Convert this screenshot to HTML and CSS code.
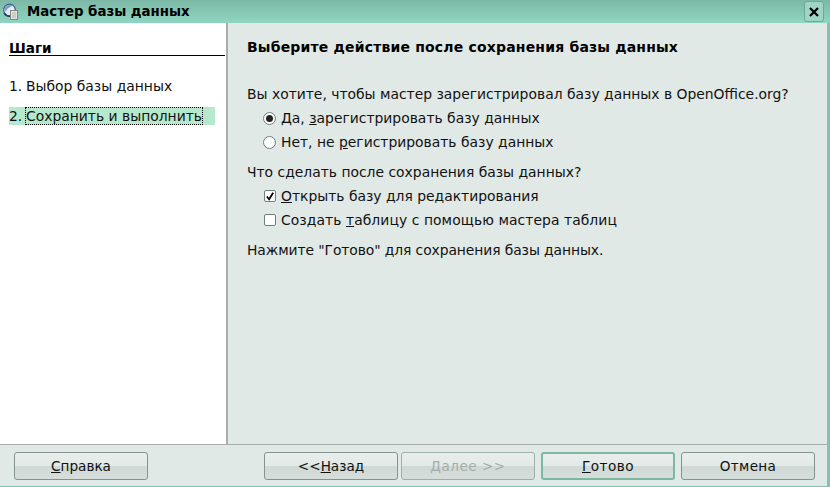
FILE: index.html
```html
<!DOCTYPE html>
<html lang="ru">
<head>
<meta charset="utf-8">
<title>Мастер базы данных</title>
<link rel="stylesheet" href="styles.css">
</head>
<body>
<div class="window">
  <header class="titlebar">
    <svg class="app-icon" width="18" height="18" viewBox="0 0 18 18">
      <circle cx="6.5" cy="7" r="5.8" fill="#e4ecf5" stroke="#3c5f8e" stroke-width="1.2"/>
      <path d="M1.5 6 C3 2 7 1 10 2.5 L7 4 L4 6 L3 9 Z" fill="#7f9dc4"/>
      <path d="M1 10 C3 13 6 13.5 8 13" fill="none" stroke="#24395c" stroke-width="1.4"/>
      <rect x="7.5" y="7.5" width="7" height="9" fill="#e6e6de" stroke="#7f8780"/>
      <path d="M9 10h4M9 12h4M9 14h4" stroke="#b0b5ae" stroke-width="1"/>
    </svg>
    <span class="title">Мастер базы данных</span>
    <span class="close">
      <svg width="10" height="10" viewBox="0 0 10 10"><path d="M1 1 L9 9 M9 1 L1 9" stroke="#000" stroke-width="2.2"/></svg>
    </span>
  </header>
  <div class="main">
    <aside class="steps">
      <h2 class="steps-title">Шаги</h2>
      <div class="step"><span class="num">1.</span><span class="step-text">Выбор базы данных</span></div>
      <div class="step current"><span class="num">2.</span><span class="step-text focus">Сохранить и выполнить</span></div>
    </aside>
    <section class="content">
      <h1 class="heading">Выберите действие после сохранения базы данных</h1>
      <p class="question">Вы хотите, чтобы мастер зарегистрировал базу данных в OpenOffice.org?</p>
      <div class="options">
        <div class="option"><span class="radio checked"></span><span>Да, <u>з</u>арегистрировать базу данных</span></div>
        <div class="option"><span class="radio"></span><span>Нет, не <u>р</u>егистрировать базу данных</span></div>
      </div>
      <p class="question second">Что сделать после сохранения базы данных?</p>
      <div class="options">
        <div class="option"><span class="check"><svg width="11" height="11" viewBox="0 0 11 11"><path d="M2 5.5 L4.5 8.5 L9 1.5" fill="none" stroke="#000" stroke-width="2"/></svg></span><span><u>О</u>ткрыть базу для редактирования</span></div>
        <div class="option wide-line"><span class="check"></span><span>Создать <u>т</u>аблицу с помощью мастера таблиц</span></div>
      </div>
      <p class="question third">Нажмите "Готово" для сохранения базы данных.</p>
    </section>
  </div>
  <footer class="buttons">
    <button class="btn"><u>С</u>правка</button>
    <span class="spacer"></span>
    <button class="btn">&lt;&lt;<u>Н</u>азад</button>
    <button class="btn disabled wide"><u>Д</u>алее &gt;&gt;</button>
    <button class="btn default wide"><u>Г</u>отово</button>
    <button class="btn cancel">Отмена</button>
  </footer>
</div>
</body>
</html>
```
FILE: styles.css
```css
html, body { margin: 0; padding: 0; }
body { width: 830px; height: 487px; overflow: hidden; font-family: "DejaVu Sans", sans-serif; font-size: 13.9px; color: #111; }
.window { width: 830px; height: 487px; display: flex; flex-direction: column; box-sizing: border-box; background: #e1e9e6; border-right: 3px solid #7fc4b0; border-bottom: 1px solid #7fc4b0; }
.titlebar { flex: none; height: 23px; margin-right: -3px; display: flex; align-items: center; padding: 0 6px 0 3px; background: linear-gradient(#7cb8a6, #8ed6c1); }
.app-icon { flex: none; }
.title { margin-left: 6px; font-weight: bold; font-size: 13.33px; flex: 1; color: #000; }
.close { width: 20px; height: 21px; display: flex; align-items: center; justify-content: center; border: 1px solid #6fa796; border-radius: 3px; background: #9ed5c5; box-sizing: border-box; }
.main { flex: 1; display: flex; min-height: 0; }
.steps { flex: none; width: 228px; box-sizing: border-box; background: #fff; padding: 17px 0 0 9px; border-right: 2px solid #a9aead; }
.steps-title { margin: 0 0 21px; font-size: 13.6px; font-weight: bold; line-height: 16px; height: 15px; width: 216px; border-bottom: 1px solid #000; color: #000; }
.step { display: flex; align-items: center; height: 18px; margin-bottom: 12px; width: 206px; }
.num { width: 17px; flex: none; }
.current { background: #b5e8cd; }
.focus { outline: 1px dotted #000; line-height: 16px; height: 16px; }
.content { flex: 1; padding: 16px 0 0 19px; }
.heading { margin: 0 0 30px; font-size: 14px; letter-spacing: .18px; font-weight: bold; line-height: 17px; color: #000; }
.question { margin: 0; line-height: 17px; height: 17px; }
.options { padding-top: 3px; }
.second { margin-top: 10px; }
.third { margin-top: 10px; letter-spacing: -.1px; }
.option { display: flex; align-items: center; height: 24px; padding-left: 16px; }
.wide-line { letter-spacing: .07px; }
.radio { flex: none; width: 13px; height: 13px; box-sizing: border-box; border-radius: 50%; border: 1px solid #6f7f7a; background: #fff; margin-right: 5px; display: flex; align-items: center; justify-content: center; }
.radio.checked::before { content: ""; width: 7px; height: 7px; border-radius: 50%; background: #222; }
.check { flex: none; width: 12px; height: 12px; box-sizing: border-box; border: 1px solid #6f7f7a; border-radius: 2px; background: #fff; margin-right: 5px; margin-left: 1px; display: flex; align-items: center; justify-content: center; }
.buttons { flex: none; height: 42px; box-sizing: border-box; border-top: 1px solid #a9aead; display: flex; align-items: flex-start; padding: 7px 0 0 14px; gap: 3px; }
.spacer { flex: none; width: 110px; }
.btn { flex: none; width: 134px; height: 28px; padding: 0; margin: 0; font: 13.6px "DejaVu Sans", sans-serif; color: #111; border: 1px solid #84938e; border-radius: 3px; background: linear-gradient(#e9eeec 0, #e3e9e6 48%, #cfd9d5 52%, #d6dedb 100%); }
.btn.wide { letter-spacing: .5px; }
.btn.cancel { letter-spacing: .3px; }
.btn.disabled { color: #a5adaa; border-color: #9bb0a8; }
.btn.default { border: 2px solid #7cb8a0; margin-left: 3px; margin-right: 3px; }
```
